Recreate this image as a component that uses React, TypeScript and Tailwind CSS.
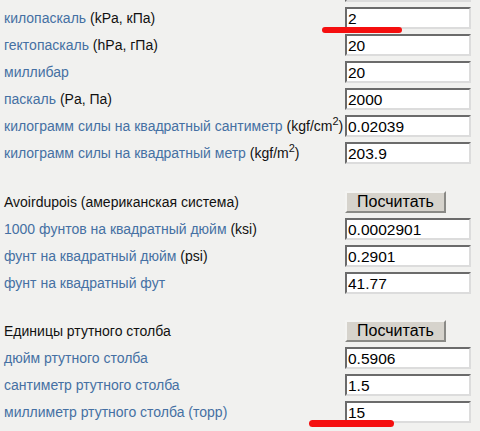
type Row = { label: string; unit?: React.ReactNode; value: string };

const metric: Row[] = [
  { label: "", value: "" },
  { label: "килопаскаль", unit: "(kPa, кПа)", value: "2" },
  { label: "гектопаскаль", unit: "(hPa, гПа)", value: "20" },
  { label: "миллибар", value: "20" },
  { label: "паскаль", unit: "(Pa, Па)", value: "2000" },
  {
    label: "килограмм силы на квадратный сантиметр",
    unit: (
      <>
        (kgf/cm<sup className="text-[11px]">2</sup>)
      </>
    ),
    value: "0.02039",
  },
  {
    label: "килограмм силы на квадратный метр",
    unit: (
      <>
        (kgf/m<sup className="text-[11px]">2</sup>)
      </>
    ),
    value: "203.9",
  },
];

const avoirdupois: Row[] = [
  { label: "1000 фунтов на квадратный дюйм", unit: "(ksi)", value: "0.0002901" },
  { label: "фунт на квадратный дюйм", unit: "(psi)", value: "0.2901" },
  { label: "фунт на квадратный фут", value: "41.77" },
];

const mercury: Row[] = [
  { label: "дюйм ртутного столба", value: "0.5906" },
  { label: "сантиметр ртутного столба", value: "1.5" },
  { label: "миллиметр ртутного столба (торр)", value: "15" },
];

function UnitRow({ row }: { row: Row }) {
  return (
    <div className="flex h-[22px] items-center">
      <div className="flex-1 text-[14px] whitespace-nowrap">
        <span className="text-[#4570a3]">{row.label}</span>
        {row.unit && <span className="text-[#111]"> {row.unit}</span>}
      </div>
      <input
        readOnly
        value={row.value}
        className="h-[22px] w-[126px] bg-white border-2 border-t-[#6b6b6b] border-l-[#6b6b6b] border-r-[#dcdcdc] border-b-[#dcdcdc] px-[1px] pt-[1px] text-[15.5px] text-black outline-none"
      />
    </div>
  );
}

function Header({ title }: { title: string }) {
  return (
    <div className="flex h-[22px] items-center">
      <div className="flex-1 text-[14px] text-[#111] whitespace-nowrap">{title}</div>
      <button className="h-[22px] w-[101px] mr-[25px] bg-[#d6d3cc] border-2 border-t-[#f4f4f2] border-l-[#f4f4f2] border-r-[#8a8a86] border-b-[#8a8a86] text-[16px] text-black leading-none">
        Посчитать
      </button>
    </div>
  );
}

export default function App() {
  return (
    <div
      className="relative w-[480px] h-[431px] overflow-hidden bg-[#f1f1ef]"
      style={{ fontFamily: '"Liberation Sans", Arial, sans-serif' }}
    >
      <div className="flex flex-col gap-[5px] pl-[4px] pr-[9px] -mt-[20px]">
        {metric.map((r, i) => (
          <UnitRow key={i} row={r} />
        ))}
        <div className="h-[17px]" />
        <Header title="Avoirdupois (американская система)" />
        {avoirdupois.map((r, i) => (
          <UnitRow key={i} row={r} />
        ))}
        <div className="h-[16px]" />
        <Header title="Единицы ртутного столба" />
        {mercury.map((r, i) => (
          <UnitRow key={i} row={r} />
        ))}
      </div>
      <div className="absolute left-[322px] top-[27px] h-[6px] w-[80px] rounded-full bg-[#f50f0f]" />
      <div className="absolute left-[309px] top-[420px] h-[7px] w-[85px] rounded-full bg-[#f50f0f]" />
    </div>
  );
}
